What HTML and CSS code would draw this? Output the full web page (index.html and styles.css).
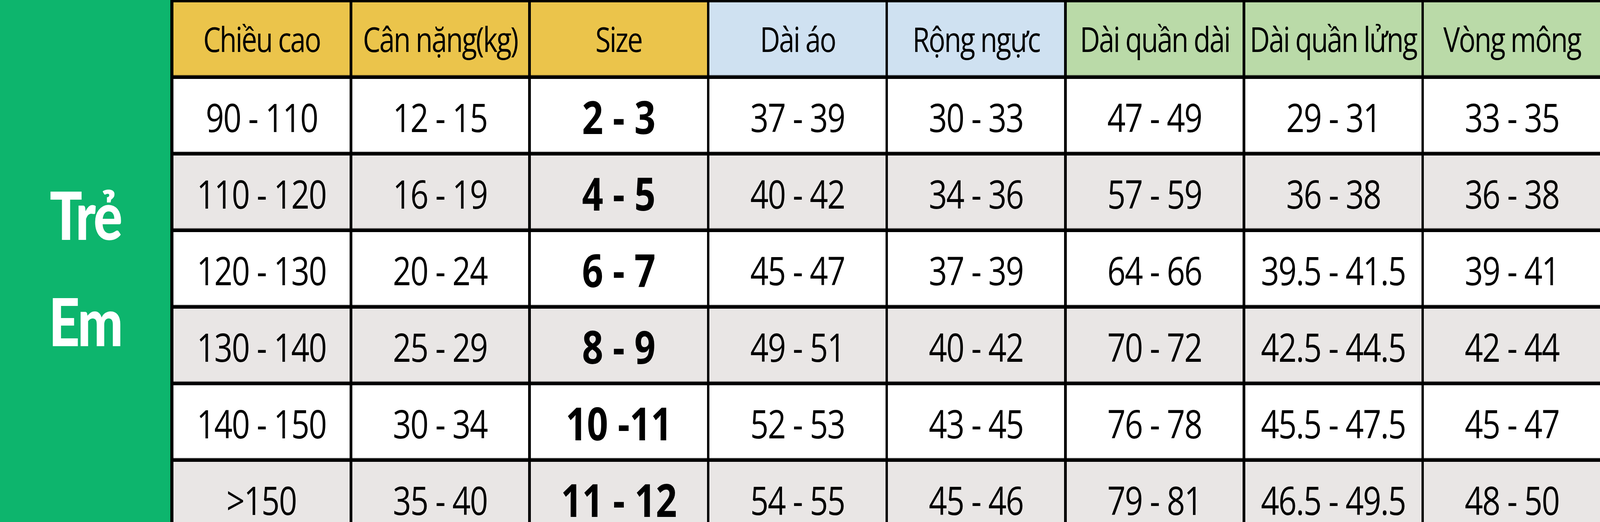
FILE: index.html
```html
<!DOCTYPE html>
<html lang="vi">
<head>
<meta charset="utf-8">
<title>Bảng size trẻ em</title>
<link rel="stylesheet" href="styles.css">
</head>
<body>
<div class="page">
  <div class="panel">
    <div class="panel-title"><span>Trẻ</span><span>Em</span></div>
  </div>
  <div class="table">
    <div class="cell head yellow"><span>Chiều cao</span></div>
    <div class="cell head yellow"><span>Cân nặng(kg)</span></div>
    <div class="cell head yellow"><span>Size</span></div>
    <div class="cell head blue"><span>Dài áo</span></div>
    <div class="cell head blue"><span>Rộng ngực</span></div>
    <div class="cell head green"><span>Dài quần dài</span></div>
    <div class="cell head green"><span>Dài quần lửng</span></div>
    <div class="cell head green"><span>Vòng mông</span></div>

    <div class="cell"><span>90 - 110</span></div>
    <div class="cell"><span>12 - 15</span></div>
    <div class="cell size"><span>2 - 3</span></div>
    <div class="cell"><span>37 - 39</span></div>
    <div class="cell"><span>30 - 33</span></div>
    <div class="cell"><span>47 - 49</span></div>
    <div class="cell"><span>29 - 31</span></div>
    <div class="cell"><span>33 - 35</span></div>

    <div class="cell alt"><span>110 - 120</span></div>
    <div class="cell alt"><span>16 - 19</span></div>
    <div class="cell alt size"><span>4 - 5</span></div>
    <div class="cell alt"><span>40 - 42</span></div>
    <div class="cell alt"><span>34 - 36</span></div>
    <div class="cell alt"><span>57 - 59</span></div>
    <div class="cell alt"><span>36 - 38</span></div>
    <div class="cell alt"><span>36 - 38</span></div>

    <div class="cell"><span>120 - 130</span></div>
    <div class="cell"><span>20 - 24</span></div>
    <div class="cell size"><span>6 - 7</span></div>
    <div class="cell"><span>45 - 47</span></div>
    <div class="cell"><span>37 - 39</span></div>
    <div class="cell"><span>64 - 66</span></div>
    <div class="cell"><span>39.5 - 41.5</span></div>
    <div class="cell"><span>39 - 41</span></div>

    <div class="cell alt"><span>130 - 140</span></div>
    <div class="cell alt"><span>25 - 29</span></div>
    <div class="cell alt size"><span>8 - 9</span></div>
    <div class="cell alt"><span>49 - 51</span></div>
    <div class="cell alt"><span>40 - 42</span></div>
    <div class="cell alt"><span>70 - 72</span></div>
    <div class="cell alt"><span>42.5 - 44.5</span></div>
    <div class="cell alt"><span>42 - 44</span></div>

    <div class="cell"><span>140 - 150</span></div>
    <div class="cell"><span>30 - 34</span></div>
    <div class="cell size"><span>10 -11</span></div>
    <div class="cell"><span>52 - 53</span></div>
    <div class="cell"><span>43 - 45</span></div>
    <div class="cell"><span>76 - 78</span></div>
    <div class="cell"><span>45.5 - 47.5</span></div>
    <div class="cell"><span>45 - 47</span></div>

    <div class="cell alt"><span>&gt;150</span></div>
    <div class="cell alt"><span>35 - 40</span></div>
    <div class="cell alt size"><span>11 - 12</span></div>
    <div class="cell alt"><span>54 - 55</span></div>
    <div class="cell alt"><span>45 - 46</span></div>
    <div class="cell alt"><span>79 - 81</span></div>
    <div class="cell alt"><span>46.5 - 49.5</span></div>
    <div class="cell alt"><span>48 - 50</span></div>
  </div>
</div>
<script src="script.js"></script>
</body>
</html>
```

FILE: script.js
```js
// The design is drawn for a 5004px-wide window; squeeze glyphs horizontally
// in proportion when the actual window is narrower, as the columns are.
(function () {
  var sx = Math.min(1, window.innerWidth / 5004);
  document.documentElement.style.setProperty('--sx', sx.toFixed(4));
})();
```

FILE: styles.css
```css
html, body {
  margin: 0;
  padding: 0;
  background: #ffffff;
}

body {
  overflow: hidden;
}

.page {
  display: flex;
  width: 100%;
  height: 1369px;
  overflow: hidden;
}

.panel {
  flex: 0 0 10.65vw;
  background: #0db56d;
  display: flex;
  align-items: center;
  justify-content: center;
}

.panel-title {
  display: flex;
  flex-direction: column;
  align-items: center;
  font-family: Lato, "Inter", "Liberation Sans", sans-serif;
  font-weight: 900;
  font-size: 169px;
  line-height: 272px;
  letter-spacing: -0.03em;
  color: #ffffff;
}

.panel-title span {
  display: block;
  transform: scaleX(var(--sx, 1));
}

.table {
  flex: 1 1 auto;
  display: grid;
  grid-template-columns: repeat(8, minmax(0, 1fr));
  grid-template-rows: repeat(7, 187px);
  column-gap: 0.16vw;
  row-gap: 9px;
  background: #000000;
  border-left: 0.2vw solid #000000;
  border-top: 6px solid #000000;
  align-content: start;
  min-width: 0;
}

.cell {
  display: flex;
  align-items: center;
  justify-content: center;
  overflow: visible;
  background: #ffffff;
  color: #000000;
  font-family: "Open Sans", "Noto Sans", "Liberation Sans", sans-serif;
  font-size: 100px;
  line-height: 1;
  letter-spacing: -0.025em;
  white-space: nowrap;
  box-shadow: inset 0 -2px 0 rgba(0, 0, 0, 0.22);
  padding-top: 6px;
  box-sizing: border-box;
}

.cell span {
  display: inline-block;
  transform: scaleX(var(--sx, 1));
}

.cell.alt {
  background: #e9e6e5;
}

.cell.size {
  font-weight: 700;
  font-size: 116px;
  line-height: 0.9;
  letter-spacing: 0;
}

.cell.head {
  font-size: 87px;
  letter-spacing: -0.04em;
  padding-top: 0;
}

.cell.yellow {
  background: #ebc44b;
}

.cell.blue {
  background: #cfe1f1;
}

.cell.green {
  background: #badaa8;
}
```
